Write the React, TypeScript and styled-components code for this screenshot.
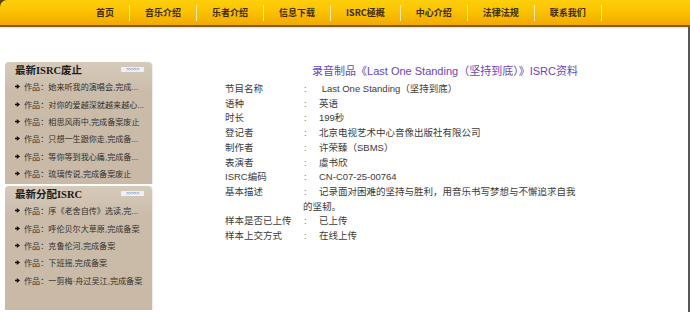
import React from "react";
import styled, { createGlobalStyle } from "styled-components";

const Global = createGlobalStyle`
  html, body { margin: 0; padding: 0; background: #fff; }
  body { font-family: "Liberation Sans", "Noto Sans CJK SC", sans-serif; width: 690px; height: 312px; overflow: hidden; }
`;

const Page = styled.div`
  width: 690px;
  height: 312px;
  display: flex;
  flex-direction: column;
`;

const NavWrap = styled.div`
  background: #5b4516;
`;

const Nav = styled.nav`
  height: 25px;
  border-top-left-radius: 7px;
  background: linear-gradient(#fdcf0c 0%, #fbc300 45%, #f2a900 100%);
  border-bottom: 2px solid #7c5f24;
  display: flex;
  align-items: center;
  padding-left: 81px;
  box-shadow: 0 1px 2px rgba(0, 0, 0, 0.15);
`;

const NavItem = styled.a`
  font-family: "Noto Sans CJK SC", sans-serif;
  font-weight: 700;
  font-size: 9px;
  line-height: 16px;
  color: #3c2a06;
  padding: 0 15px;
  text-decoration: none;
  white-space: nowrap;
`;

const NavSep = styled.span`
  width: 1px;
  height: 16px;
  background: rgba(255, 244, 210, 0.85);
  margin-top: 1px;
`;

const Body = styled.div`
  flex: 1;
  display: flex;
  align-items: flex-start;
  padding-top: 35px;
  border-right: 2px solid #575757;
`;

const Sidebar = styled.aside`
  width: 147px;
  margin-left: 5px;
  display: flex;
  flex-direction: column;
  gap: 2px;
`;

const Box = styled.section<{ $h: number }>`
  height: ${(p) => p.$h}px;
  background: linear-gradient(#d6cabb 0px, #cbbcaa 30px, #c9b9a6 100%);
  border-top-left-radius: 4px;
  border-top-right-radius: 4px;
  box-shadow: 1px 0 1px rgba(0, 0, 0, 0.08);
  padding: 1px 0 0 10px;
  box-sizing: border-box;
`;

const BoxHead = styled.div`
  display: flex;
  align-items: center;
  justify-content: space-between;
  height: 15px;
  padding-right: 8px;
`;

const BoxTitle = styled.h3`
  margin: 0;
  font-family: "Liberation Serif", "Noto Sans CJK SC", serif;
  font-weight: 700;
  font-size: 10.5px;
  line-height: 15px;
  color: #1d1a16;
`;

const More = styled.span`
  display: inline-block;
  width: 23px;
  height: 5px;
  background: #eef2f5;
  border-radius: 1px;
  color: #3f6fc2;
  font-family: "Liberation Sans", sans-serif;
  font-size: 5px;
  line-height: 5px;
  text-align: center;
  letter-spacing: -0.3px;
  margin-top: -3px;
`;

const List = styled.ul`
  list-style: none;
  margin: 0;
  padding: 0;
`;

const Item = styled.li`
  display: flex;
  align-items: center;
  height: 17.4px;
  white-space: nowrap;
  overflow: hidden;
  font-family: "Liberation Sans", "Noto Sans CJK SC", sans-serif;
  font-size: 8.1px;
  color: #332f2b;
`;

const Bullet = styled.svg`
  width: 6px;
  height: 5px;
  margin: 0 4px 0 -1px;
  flex: none;
`;

const Main = styled.main`
  margin-left: 73px;
  width: 440px;
`;

const Title = styled.h2`
  margin: 0 0 2px;
  text-align: center;
  font-weight: 400;
  font-size: 11px;
  line-height: 18px;
  color: #6847bd;
  font-family: "Liberation Sans", "Noto Sans CJK SC", sans-serif;
  white-space: nowrap;
`;

const Table = styled.div`
  display: grid;
  grid-template-columns: 78px 275px;
  font-size: 9.5px;
  line-height: 14.7px;
  color: #3b3b3b;
`;

const Label = styled.div`
  white-space: nowrap;
`;

const Value = styled.div`
  &::before {
    content: ":";
    display: inline-block;
    width: 16px;
    padding-left: 1px;
    box-sizing: border-box;
    color: #777;
  }
`;

const recent = [
  "作品：她来听我的演唱会,完成...",
  "作品：对你的爱越深就越来越心...",
  "作品：相思风雨中,完成备案废止",
  "作品：只想一生跟你走,完成备...",
  "作品：等你等到我心痛,完成备...",
  "作品：琉璃传说,完成备案废止",
];

const assigned = [
  "作品：序《老舍自传》选读,完...",
  "作品：呼伦贝尔大草原,完成备案",
  "作品：克鲁伦河,完成备案",
  "作品：下班摇,完成备案",
  "作品：一剪梅·舟过吴江,完成备案",
];

const navs = ["首页", "音乐介绍", "乐者介绍", "信息下载", "ISRC極概", "中心介绍", "法律法规", "联系我们"];

const rows: [string, string][] = [
  ["节目名称", "\u00a0Last One Standing（坚持到底）"],
  ["语种", "英语"],
  ["时长", "199秒"],
  ["登记者", "北京电视艺术中心音像出版社有限公司"],
  ["制作者", "许荣臻（SBMS）"],
  ["表演者", "虞书欣"],
  ["ISRC编码", "CN-C07-25-00764"],
  ["基本描述", "记录面对困难的坚持与胜利，用音乐书写梦想与不懈追求自我的坚韧。"],
  ["样本是否已上传", "已上传"],
  ["样本上交方式", "在线上传"],
];

const Arrow = () => (
  <Bullet viewBox="0 0 6 5">
    <path d="M0 1.7h2.8V0L6 2.5 2.8 5V3.3H0z" fill="#111" />
  </Bullet>
);

const SideBox = ({ title, items, h }: { title: string; items: string[]; h: number }) => (
  <Box $h={h}>
    <BoxHead>
      <BoxTitle>{title}</BoxTitle>
      <More>&gt;&gt;&gt;&gt;&gt;</More>
    </BoxHead>
    <List>
      {items.map((t) => (
        <Item key={t}>
          <Arrow />
          {t}
        </Item>
      ))}
    </List>
  </Box>
);

export default function App() {
  return (
    <Page>
      <Global />
      <NavWrap>
        <Nav>
          {navs.map((n) => (
            <React.Fragment key={n}>
              <NavItem>{n}</NavItem>
              <NavSep />
            </React.Fragment>
          ))}
        </Nav>
      </NavWrap>
      <Body>
        <Sidebar>
          <SideBox title="最新ISRC废止" items={recent} h={122} />
          <SideBox title="最新分配ISRC" items={assigned} h={124} />
        </Sidebar>
        <Main>
          <Title>录音制品《Last One Standing（坚持到底）》ISRC资料</Title>
          <Table>
            {rows.map(([k, v]) => (
              <React.Fragment key={k}>
                <Label>{k}</Label>
                <Value>{v}</Value>
              </React.Fragment>
            ))}
          </Table>
        </Main>
      </Body>
    </Page>
  );
}
